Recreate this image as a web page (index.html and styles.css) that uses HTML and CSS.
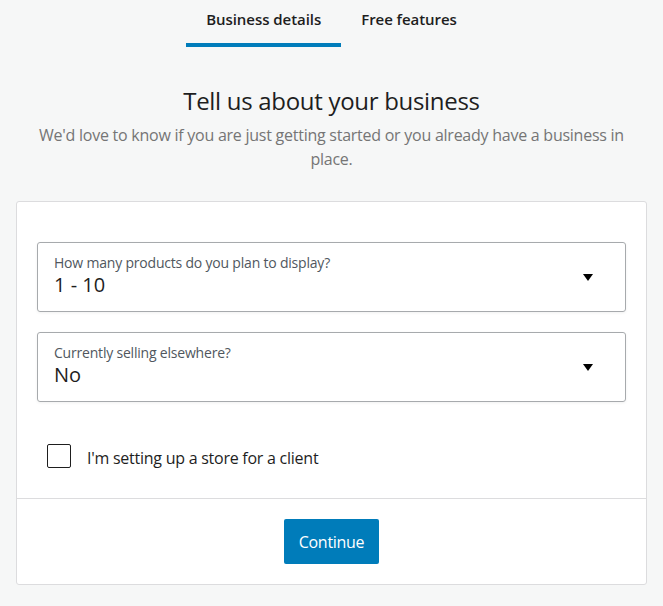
FILE: index.html
```html
<!DOCTYPE html>
<html lang="en">
<head>
<meta charset="utf-8">
<title>Business details</title>
<link rel="stylesheet" href="styles.css">
</head>
<body>
<nav class="tabs">
  <div class="tab tab-active">Business details</div>
  <div class="tab">Free features</div>
</nav>
<main class="page">
  <h1 class="title">Tell us about your business</h1>
  <p class="subtitle">We'd love to know if you are just getting started or you already have a business in place.</p>
  <section class="card">
    <div class="card-body">
      <div class="select">
        <div class="select-text">
          <div class="select-label">How many products do you plan to display?</div>
          <div class="select-value">1 - 10</div>
        </div>
        <span class="caret"></span>
      </div>
      <div class="select">
        <div class="select-text">
          <div class="select-label">Currently selling elsewhere?</div>
          <div class="select-value">No</div>
        </div>
        <span class="caret"></span>
      </div>
      <label class="check-row">
        <span class="checkbox"></span>
        <span class="check-label">I'm setting up a store for a client</span>
      </label>
    </div>
    <div class="card-footer">
      <button class="btn-primary">Continue</button>
    </div>
  </section>
</main>
</body>
</html>
```
FILE: styles.css
```css
* { box-sizing: border-box; }
html, body { margin: 0; padding: 0; }
body {
  background: #f6f7f7;
  font-family: "Open Sans", "Noto Sans", sans-serif;
  color: #1e1e1e;
  width: 663px;
}
.tabs {
  display: flex;
  justify-content: center;
}
.tab {
  padding: 7px 20px 12px;
  font-size: 15px;
  line-height: 24px;
  font-weight: 600;
  letter-spacing: -0.05px;
  color: #1e1e1e;
  border-bottom: 4px solid transparent;
}
.tab-active { border-bottom-color: #007cba; }
.page { padding: 0 16px; }
.title {
  margin: 38px 0 0;
  text-align: center;
  font-size: 24px;
  line-height: 32px;
  font-weight: 400;
  letter-spacing: -0.3px;
  color: #1e1e1e;
}
.subtitle {
  margin: 6px 0 0;
  padding: 0 20px;
  text-align: center;
  font-size: 16px;
  line-height: 24px;
  letter-spacing: -0.25px;
  color: #757575;
}
.card {
  margin-top: 30px;
  background: #fff;
  border: 1px solid #dcdcde;
  border-radius: 3px;
}
.card-body { padding: 40px 20px 28px; }
.select {
  display: flex;
  align-items: center;
  height: 70px;
  padding: 10px 32px 14px 16px;
  border: 1px solid #a7aaad;
  border-radius: 3px;
  box-shadow: 0 1px 3px rgba(0,0,0,0.06);
}
.select + .select { margin-top: 20px; }
.select-text { flex: 1; }
.select-label {
  font-size: 14px;
  line-height: 20px;
  color: #50575e;
  letter-spacing: -0.2px;
}
.select-value {
  font-size: 20px;
  line-height: 24px;
  color: #1e1e1e;
}
.caret {
  width: 0;
  height: 0;
  border-left: 5px solid transparent;
  border-right: 5px solid transparent;
  border-top: 7px solid #000;
  margin-top: 4px;
}
.check-row {
  display: flex;
  align-items: center;
  margin: 40px 0 0 10px;
  gap: 16px;
}
.checkbox {
  width: 24px;
  height: 24px;
  border: 1px solid #1e1e1e;
  border-radius: 2px;
}
.check-label {
  font-size: 16px;
  line-height: 24px;
  letter-spacing: -0.25px;
  color: #1e1e1e;
  margin-top: 4px;
}
.card-footer {
  border-top: 1px solid #dcdcde;
  padding: 20px;
  display: flex;
  justify-content: center;
}
.btn-primary {
  background: #007cba;
  color: #fff;
  border: 0;
  border-radius: 2px;
  height: 45px;
  padding: 0 15px;
  font-family: inherit;
  font-size: 16px;
  letter-spacing: -0.3px;
}
```
